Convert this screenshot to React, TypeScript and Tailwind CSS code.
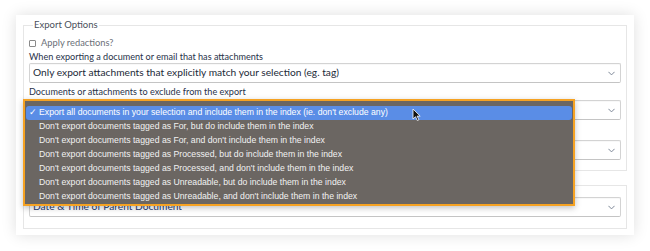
import * as React from "react";

const options = [
  "Export all documents in your selection and include them in the index (ie. don't exclude any)",
  "Don't export documents tagged as For, but do include them in the index",
  "Don't export documents tagged as For, and don't include them in the index",
  "Don't export documents tagged as Processed, but do include them in the index",
  "Don't export documents tagged as Processed, and don't include them in the index",
  "Don't export documents tagged as Unreadable, but do include them in the index",
  "Don't export documents tagged as Unreadable, and don't include them in the index",
];

const Chevron = () => (
  <svg viewBox="0 0 10 6" className="w-[7px] h-[5px]" fill="none" stroke="#7a8494" strokeWidth={1.4}>
    <path d="M1 1l4 4 4-4" strokeLinecap="round" strokeLinejoin="round" />
  </svg>
);

type SelectProps = {
  value?: string;
  className?: string;
  textClassName?: string;
};

const FakeSelect = ({ value, className, textClassName }: SelectProps) => (
  <div
    className={
      "h-[20px] flex items-center justify-between border border-[#d3d3d3] border-b-[#c4c4c4] rounded-[2px] bg-white pl-[3px] pr-[5px] shadow-[inset_0_1px_1px_rgba(0,0,0,0.03)] " +
      (className || "")
    }
  >
    <span className={"truncate " + (textClassName || "text-[#2a2a2a]")}>{value}</span>
    <Chevron />
  </div>
);

const App = () => {
  return (
    <div className="relative w-[650px] h-[251px] bg-white overflow-hidden pt-[15px] pl-[16px] font-['Lato','Noto_Sans',sans-serif]">
      <div className="w-[618px] h-[220px] bg-white shadow-[0_0_14px_rgba(0,0,0,0.13)] px-[7px] pt-[4px]">
        <fieldset className="border border-[#e6e6e6] px-[5px] pb-[10px] h-[152px]">
          <legend className="ml-[4px] px-[1px] text-[9.5px] leading-[12px] text-[#4a4f5a]">
            Export Options
          </legend>
          <div className="flex items-center gap-[5px] mt-[6px] h-[12px]">
            <div className="w-[7px] h-[7px] border border-[#8a8a8a] rounded-[1px] bg-white" />
            <span className="text-[9.3px] text-[#6b6f78]">Apply redactions?</span>
          </div>
          <div className="text-[9.1px] leading-[12px] text-[#28324a] mt-[2px]">
            When exporting a document or email that has attachments
          </div>
          <FakeSelect
            textClassName="text-[10.2px] text-[#222a38]"
            value="Only export attachments that explicitly match your selection (eg. tag)"
          />
          <div className="text-[9.1px] leading-[12px] text-[#28324a] mt-[3px]">
            Documents or attachments to exclude from the export
          </div>
          <FakeSelect className="mt-[2px]" />
          <FakeSelect className="mt-[20px]" />
        </fieldset>
        <fieldset className="border border-[#e6e6e6] px-[5px] mt-[14px] h-[44px] pt-[11px]">
          <FakeSelect
            textClassName="text-[10.2px] text-[#1f3a6e]"
            value="Date & Time of Parent Document"
          />
        </fieldset>
      </div>

      <div className="absolute left-[23px] top-[99px] w-[552px] border-2 border-[#f5a223] bg-[#6b6662] pt-[5px] pb-0 px-[1px] shadow-[0_2px_6px_rgba(0,0,0,0.25)] font-['Liberation_Sans',sans-serif]">
        {options.map((o, i) => (
          <div
            key={i}
            className={
              "h-[14px] flex items-center text-[8.7px] text-[#f2f2f2] rounded-[3px] " +
              (i === 0 ? "bg-[#5a8de6] text-white" : "")
            }
          >
            <span className="w-[13px] pl-[3px] text-[9px]">{i === 0 ? "✓" : ""}</span>
            <span>{o}</span>
          </div>
        ))}
      </div>

      <svg
        className="absolute left-[412px] top-[108px] w-[9px] h-[13px]"
        viewBox="0 0 9 13"
      >
        <path d="M1 1v10l2.5-2.3 1.8 3.8 1.6-.7-1.8-3.7H8.2z" fill="#111" stroke="#fff" strokeWidth={0.8} />
      </svg>
    </div>
  );
};

export default App;
